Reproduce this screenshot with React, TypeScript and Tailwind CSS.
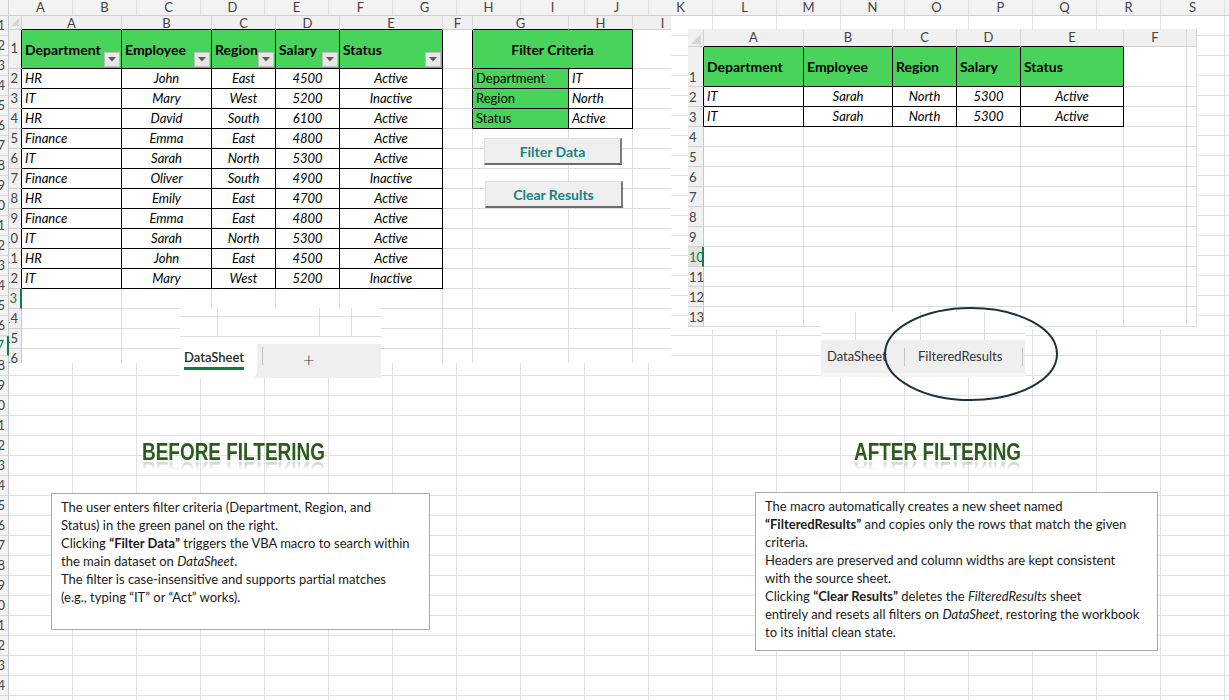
import React from "react";

const FONT = "font-['Lato','Liberation_Sans',sans-serif]";

const OUTER_LETTERS = "ABCDEFGHIJKLMNOPQRS".split("");
const OUTER_ROWS = Array.from({ length: 35 }, (_, i) => i + 1);

function OuterSheet() {
  return (
    <div className="flex flex-col">
      <div className="flex h-[16px] bg-[#f3f3f3] border-b border-b-[#d0d0d0]">
        <div className="w-[9px] shrink-0 border-r border-r-[#d0d0d0]" />
        {OUTER_LETTERS.map((c) => (
          <div
            key={c}
            className="w-[64px] shrink-0 border-r border-r-[#e0e0e0] flex items-center justify-center text-[13px] leading-none text-[#444]"
          >
            {c}
          </div>
        ))}
        <div className="flex-1" />
      </div>
      {OUTER_ROWS.map((r) => (
        <div key={r} className="flex h-[20px]">
          <div
            className={`w-[9px] shrink-0 overflow-hidden flex justify-end items-center pr-[3px] bg-[#f3f3f3] border-b border-b-[#d8d8d8] text-[13px] ${
              r === 17 ? "text-[#107c41] border-r-2 border-r-[#107c41]" : "text-[#444] border-r border-r-[#c8c8c8]"
            }`}
          >
            {r}
          </div>
          {OUTER_LETTERS.map((c) => (
            <div key={c} className="w-[64px] shrink-0 border-r border-b border-[#e1e1e1]" />
          ))}
          <div className="flex-1 border-b border-[#e1e1e1]" />
        </div>
      ))}
    </div>
  );
}

const HEAD = ["Department", "Employee", "Region", "Salary", "Status"];
const DATA = [
  ["HR", "John", "East", "4500", "Active"],
  ["IT", "Mary", "West", "5200", "Inactive"],
  ["HR", "David", "South", "6100", "Active"],
  ["Finance", "Emma", "East", "4800", "Active"],
  ["IT", "Sarah", "North", "5300", "Active"],
  ["Finance", "Oliver", "South", "4900", "Inactive"],
  ["HR", "Emily", "East", "4700", "Active"],
  ["Finance", "Emma", "East", "4800", "Active"],
  ["IT", "Sarah", "North", "5300", "Active"],
  ["HR", "John", "East", "4500", "Active"],
  ["IT", "Mary", "West", "5200", "Inactive"],
];
const CRIT = [
  ["Department", "IT"],
  ["Region", "North"],
  ["Status", "Active"],
];

const LCOLS = [
  { k: "A", w: "w-[100px]" },
  { k: "B", w: "w-[90px]" },
  { k: "C", w: "w-[64px]" },
  { k: "D", w: "w-[64px]" },
  { k: "E", w: "w-[103px]" },
  { k: "F", w: "w-[30px]" },
  { k: "G", w: "w-[96px]" },
  { k: "H", w: "w-[64px]" },
  { k: "I", w: "w-[60px]" },
];

function lTable(r: number, c: number) {
  return (r >= 1 && r <= 12 && c >= 0 && c <= 4) || (r >= 1 && r <= 4 && (c === 6 || c === 7));
}

function borders(rBlack: boolean, bBlack: boolean) {
  return `border-r border-b ${rBlack ? "border-r-black" : "border-r-[#dcdcdc]"} ${
    bBlack ? "border-b-black" : "border-b-[#dcdcdc]"
  }`;
}

function Dropdown() {
  return (
    <div className="absolute right-[1px] bottom-[1px] w-[16px] h-[15px] bg-[#e8e8e8] border border-[#bdbdbd] flex items-center justify-center">
      <svg width="8" height="5" viewBox="0 0 8 5">
        <polygon points="0,0 8,0 4,4.5" fill="#5a5a5a" />
      </svg>
    </div>
  );
}

function SelectAll({ w, h }: { w: string; h: string }) {
  return (
    <div className={`${w} ${h} shrink-0 bg-[#f0f0f0] border-r border-b border-[#d0d0d0] flex items-end justify-end p-[2px]`}>
      <svg width="10" height="10" viewBox="0 0 10 10">
        <polygon points="10,0 10,10 0,10" fill="#d6d6d6" />
      </svg>
    </div>
  );
}

function LeftCell({ r, c }: { r: number; c: number }) {
  const col = LCOLS[c];
  const h = r === 1 ? "h-[39px]" : "h-[20px]";
  const rB = lTable(r, c) || lTable(r, c + 1);
  const bB = lTable(r, c) || lTable(r + 1, c);
  let bg = "bg-white";
  let content: React.ReactNode = null;
  let align = "justify-center";
  let extra = "";
  if (r === 1 && c <= 4) {
    bg = "bg-[#48d35b]";
    align = "justify-start pl-[3px]";
    extra = "relative font-bold text-[14px]";
    content = (
      <>
        <span>{HEAD[c]}</span>
        <Dropdown />
      </>
    );
  } else if (r >= 2 && r <= 12 && c <= 4) {
    align = c === 0 ? "justify-start pl-[3px]" : "justify-center";
    extra = "italic text-[13px]";
    content = DATA[r - 2][c];
  } else if (r >= 2 && r <= 4 && c === 6) {
    bg = "bg-[#48d35b]";
    align = "justify-start pl-[3px]";
    extra = "text-[13px]";
    content = CRIT[r - 2][0];
  } else if (r >= 2 && r <= 4 && c === 7) {
    align = "justify-start pl-[3px]";
    extra = "italic text-[13px]";
    content = CRIT[r - 2][1];
  }
  return (
    <div className={`${col.w} ${h} shrink-0 flex items-center ${align} ${bg} ${extra} ${borders(rB, bB)} text-black whitespace-nowrap`}>
      {content}
    </div>
  );
}

function LeftImage() {
  const rows = Array.from({ length: 16 }, (_, i) => i + 1);
  return (
    <div className={`absolute left-[9px] top-[16px] w-[662px] h-[347px] bg-white overflow-hidden ${FONT}`}>
      <div className="flex h-[14px] overflow-hidden">
        <SelectAll w="w-[13px]" h="h-[14px]" />
        {LCOLS.map((col, c) => (
          <div
            key={col.k}
            className={`${col.w} shrink-0 bg-[#f0f0f0] border-r border-r-[#d8d8d8] border-b ${
              lTable(1, c) ? "border-b-black" : "border-b-[#d0d0d0]"
            } flex items-end justify-center text-[13px] leading-[12px] text-[#444]`}
          >
            {col.k === "G" || col.k === "H" ? ["G", "H"][c - 6] : col.k}
          </div>
        ))}
      </div>
      {rows.map((r) => (
        <div key={r} className="flex">
          <div
            className={`w-[13px] shrink-0 overflow-hidden flex items-center justify-end pr-[3px] bg-[#f0f0f0] border-b border-b-[#d0d0d0] text-[13px] ${
              r === 1 ? "h-[39px]" : "h-[20px]"
            } ${
              r === 13
                ? "text-[#107c41] border-r-2 border-r-[#107c41]"
                : lTable(r, 0)
                ? "text-[#444] border-r border-r-black"
                : "text-[#444] border-r border-r-[#c8c8c8]"
            }`}
          >
            {r}
          </div>
          {r === 1 ? (
            <>
              {LCOLS.slice(0, 6).map((col, c) => (
                <LeftCell key={col.k} r={1} c={c} />
              ))}
              <div className="w-[160px] h-[39px] shrink-0 flex items-center justify-center bg-[#48d35b] font-bold text-[14px] text-black border-r border-b border-r-black border-b-black">
                Filter Criteria
              </div>
              <LeftCell r={1} c={8} />
            </>
          ) : (
            LCOLS.map((col, c) => <LeftCell key={col.k} r={r} c={c} />)
          )}
        </div>
      ))}
      <button className="absolute left-[475px] top-[122px] w-[138px] h-[27px] bg-[#efefef] border-t border-l border-t-[#dedede] border-l-[#dedede] border-r-2 border-b-2 border-r-[#7a7a7a] border-b-[#6a6a6a] text-[14px] font-bold text-[#15847f] flex items-center justify-center">
        Filter Data
      </button>
      <button className="absolute left-[476px] top-[165px] w-[138px] h-[27px] bg-[#efefef] border-t border-l border-t-[#dedede] border-l-[#dedede] border-r-2 border-b-2 border-r-[#7a7a7a] border-b-[#6a6a6a] text-[14px] font-bold text-[#15847f] flex items-center justify-center">
        Clear Results
      </button>
    </div>
  );
}

const RCOLS = [
  { k: "A", w: "w-[100px]" },
  { k: "B", w: "w-[89px]" },
  { k: "C", w: "w-[64px]" },
  { k: "D", w: "w-[64px]" },
  { k: "E", w: "w-[103px]" },
  { k: "F", w: "w-[63px]" },
  { k: "", w: "w-[10px]" },
];
const RDATA = [
  ["IT", "Sarah", "North", "5300", "Active"],
  ["IT", "Sarah", "North", "5300", "Active"],
];

function rTable(r: number, c: number) {
  return r >= 1 && r <= 3 && c >= 0 && c <= 4;
}

function RightImage() {
  const rows = Array.from({ length: 13 }, (_, i) => i + 1);
  return (
    <div className={`absolute left-[688px] top-[29px] w-[509px] h-[300px] bg-white overflow-hidden ${FONT}`}>
      <div className="flex h-[18px]">
        <SelectAll w="w-[16px]" h="h-[18px]" />
        {RCOLS.map((col, c) => (
          <div
            key={c}
            className={`${col.w} shrink-0 bg-[#f0f0f0] border-r border-r-[#d8d8d8] border-b ${
              rTable(1, c) ? "border-b-black" : "border-b-[#d0d0d0]"
            } flex items-center justify-center text-[13px] text-[#444]`}
          >
            {col.k}
          </div>
        ))}
      </div>
      {rows.map((r) => (
        <div key={r} className="flex">
          <div
            className={`w-[16px] shrink-0 flex items-end pb-[1px] pl-[1px] border-b border-b-[#d0d0d0] text-[13px] leading-[16px] ${
              r === 1 ? "h-[40px]" : "h-[20px]"
            } ${
              r === 10
                ? "bg-[#e2e2e2] text-[#107c41] border-r-2 border-r-[#107c41]"
                : rTable(r, 0)
                ? "bg-[#f0f0f0] text-[#444] border-r border-r-black"
                : "bg-[#f0f0f0] text-[#444] border-r border-r-[#c8c8c8]"
            }`}
          >
            {r}
          </div>
          {RCOLS.map((col, c) => {
            const rB = rTable(r, c) || rTable(r, c + 1);
            const bB = rTable(r, c) || rTable(r + 1, c);
            let bg = "bg-white";
            let content: React.ReactNode = null;
            let align = "justify-center";
            let extra = "";
            if (r === 1 && c <= 4) {
              bg = "bg-[#48d35b]";
              align = "justify-start pl-[3px]";
              extra = "font-bold text-[14px]";
              content = HEAD[c];
            } else if (r >= 2 && r <= 3 && c <= 4) {
              align = c === 0 ? "justify-start pl-[3px]" : "justify-center";
              extra = "italic text-[13px]";
              content = RDATA[r - 2][c];
            }
            return (
              <div
                key={c}
                className={`${col.w} ${r === 1 ? "h-[40px]" : "h-[20px]"} shrink-0 flex items-center ${align} ${bg} ${extra} ${borders(
                  rB,
                  bB
                )} text-black whitespace-nowrap`}
              >
                {content}
              </div>
            );
          })}
        </div>
      ))}
    </div>
  );
}

function LeftTabs() {
  return (
    <div className={`absolute left-[180px] top-[308px] w-[201px] h-[70px] flex flex-col bg-white ${FONT}`}>
      <div className="h-[38px] flex flex-col">
        <div className="h-[9px] flex border-b border-[#dcdcdc]">
          <div className="w-[38px] border-r border-[#dcdcdc]" />
          <div className="w-[102px] border-r border-[#dcdcdc]" />
          <div className="w-[32px] border-r border-[#dcdcdc]" />
        </div>
        <div className="h-[20px] flex border-b border-[#dcdcdc]">
          <div className="w-[38px] border-r border-[#dcdcdc]" />
          <div className="w-[102px] border-r border-[#dcdcdc]" />
          <div className="w-[32px] border-r border-[#dcdcdc]" />
        </div>
        <div className="flex-1" />
      </div>
      <div className="flex-1 flex bg-[#efefef]">
        <div className="w-[77px] bg-white rounded-br-[6px] flex flex-col items-start pl-[4px] pt-[5px]">
          <span className="text-[13px] font-semibold text-[#2b2b2b] leading-[16px] pb-[2px] border-b-[3px] border-b-[#107c41]">
            DataSheet
          </span>
        </div>
        <div className="w-[5px]" />
        <div className="w-px h-[18px] mt-[3px] bg-[#c4c4c4]" />
        <div className="pl-[40px] flex items-center text-[20px] font-light text-[#444] pb-[4px]">+</div>
      </div>
    </div>
  );
}

function RightTabs() {
  return (
    <div className={`absolute left-[821px] top-[312px] w-[204px] h-[65px] flex flex-col bg-white ${FONT}`}>
      <div className="h-[28px] flex flex-col">
        <div className="h-[22px] flex border-b border-[#dcdcdc]">
          <div className="w-[35px] border-r border-[#dcdcdc]" />
          <div className="w-[65px] border-r border-[#dcdcdc]" />
          <div className="w-[64px] border-r border-[#dcdcdc]" />
        </div>
        <div className="flex-1 flex">
          <div className="w-[35px] border-r border-[#dcdcdc]" />
          <div className="w-[65px] border-r border-[#dcdcdc]" />
          <div className="w-[64px] border-r border-[#dcdcdc]" />
        </div>
      </div>
      <div className="h-[33px] flex items-center bg-[#efefef] text-[13px] text-[#333]">
        <span className="pl-[6px] w-[83px]">DataSheet</span>
        <div className="w-px h-[18px] bg-[#c4c4c4]" />
        <span className="pl-[13px] w-[117px]">FilteredResults</span>
        <div className="w-px h-[18px] bg-[#c4c4c4]" />
      </div>
      <div className="flex-1 bg-[#f6f6f6]" />
    </div>
  );
}

function Title({ text, pos }: { text: string; pos: string }) {
  return (
    <div className={`absolute ${pos} origin-left scale-x-[0.79] flex flex-col font-['Liberation_Sans',Arial,sans-serif]`}>
      <span className="text-[24px] leading-[24px] font-bold text-[#2a5c1c] whitespace-nowrap">{text}</span>
      <div className="-mt-[2px] h-[8px] overflow-hidden opacity-25 [mask-image:linear-gradient(to_bottom,black,transparent)]">
        <span className="block -scale-y-100 -mt-[4px] text-[24px] leading-[24px] font-bold text-[#2a5c1c] whitespace-nowrap">
          {text}
        </span>
      </div>
    </div>
  );
}

export default function App() {
  return (
    <div className={`relative w-[1229px] h-[700px] overflow-hidden bg-white ${FONT}`}>
      <OuterSheet />
      <LeftImage />
      <RightImage />
      <LeftTabs />
      <RightTabs />
      <svg className="absolute left-[883px] top-[306px]" width="176" height="96" viewBox="0 0 176 96">
        <ellipse cx="88" cy="48" rx="86" ry="46" fill="none" stroke="#18323f" strokeWidth="2" />
      </svg>
      <Title text="BEFORE FILTERING" pos="left-[142px] top-[440px]" />
      <Title text="AFTER FILTERING" pos="left-[854px] top-[440px]" />
      <div className="absolute left-[51px] top-[493px] w-[379px] h-[137px] bg-white border border-[#a9a9a9] pl-[9px] pt-[4px] text-[13px] leading-[18px] text-[#1a1a1a] whitespace-nowrap">
        <div>The user enters filter criteria (Department, Region, and</div>
        <div>Status) in the green panel on the right.</div>
        <div>
          Clicking <b>“Filter Data”</b> triggers the VBA macro to search within
        </div>
        <div>
          the main dataset on <i>DataSheet</i>.
        </div>
        <div>The filter is case-insensitive and supports partial matches</div>
        <div>(e.g., typing “IT” or “Act” works).</div>
      </div>
      <div className="absolute left-[755px] top-[492px] w-[403px] h-[159px] bg-white border border-[#a9a9a9] pl-[9px] pt-[4px] text-[13px] leading-[18px] text-[#1a1a1a] whitespace-nowrap">
        <div>The macro automatically creates a new sheet named</div>
        <div>
          <b>“FilteredResults”</b> and copies only the rows that match the given
        </div>
        <div>criteria.</div>
        <div>Headers are preserved and column widths are kept consistent</div>
        <div>with the source sheet.</div>
        <div>
          Clicking <b>“Clear Results”</b> deletes the <i>FilteredResults</i> sheet
        </div>
        <div>
          entirely and resets all filters on <i>DataSheet</i>, restoring the workbook
        </div>
        <div>to its initial clean state.</div>
      </div>
    </div>
  );
}
